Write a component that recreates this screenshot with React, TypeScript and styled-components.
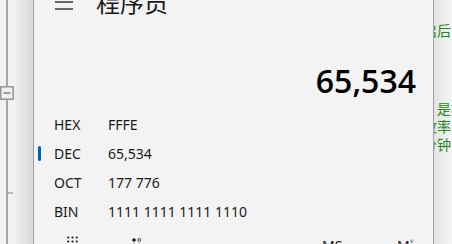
import React from 'react';
import styled, { createGlobalStyle } from 'styled-components';

const GlobalStyle = createGlobalStyle`
  html,
  body {
    margin: 0;
    padding: 0;
  }
  body {
    font-family: 'Noto Sans', 'Noto Sans CJK SC', sans-serif;
    background: #f3f3f3;
  }
`;

const Screen = styled.div`
  display: flex;
  width: 452px;
  height: 244px;
  overflow: hidden;
`;

const Gutter = styled.div`
  flex: 0 0 33px;
  border-right: 1px solid #a3a3a3;
  background: linear-gradient(
    to right,
    #f1f1f1 0,
    #f1f1f1 14px,
    #e6e6e6 22px,
    #d8d8d8 33px
  );
`;

const CalcWindow = styled.div`
  flex: 0 0 399px;
  display: flex;
  flex-direction: column;
  background: #f3f3f3;
  color: #1a1a1a;
`;

const Header = styled.div`
  display: flex;
  align-items: center;
  height: 40px;
  margin-top: -18px;
  padding-left: 21px;
  gap: 23px;
`;

const Title = styled.span`
  font-family: 'Noto Sans CJK SC', sans-serif;
  font-size: 24px;
  line-height: 40px;
`;

const Display = styled.div`
  padding: 39px 17px 0 0;
  text-align: right;
  font-family: 'Open Sans', 'Noto Sans', sans-serif;
  font-size: 32px;
  font-weight: 600;
  line-height: 40px;
  color: #000;
`;

const RowList = styled.div`
  margin-top: 9px;
  display: flex;
  flex-direction: column;
`;

const Row = styled.div`
  display: flex;
  align-items: center;
  height: 29px;
  padding-left: 4px;
  font-size: 14px;
  line-height: 29px;
`;

const Indicator = styled.span<{ $active?: boolean }>`
  width: 3px;
  height: 15px;
  border-radius: 2px;
  margin-right: 13px;
  background: ${(p) => (p.$active ? '#005fb8' : 'transparent')};
`;

const Label = styled.span`
  width: 54px;
`;

const Value = styled.span``;

const ButtonRow = styled.div`
  display: flex;
  align-items: flex-start;
  padding: 10px 0 0 33px;
`;

const IconSlot = styled.div<{ $gap?: number }>`
  display: flex;
  margin-left: ${(p) => p.$gap ?? 0}px;
`;

const MemoryGroup = styled.div`
  display: flex;
  margin-left: auto;
`;

const MemButton = styled.span<{ $width: number }>`
  width: ${(p) => p.$width}px;
  font-size: 14px;
  line-height: 20px;
`;

const CodePane = styled.div`
  flex: 1;
  border-left: 1px solid #a0a0a0;
  background: linear-gradient(to right, #e3e3e3, #f5f5f5);
  overflow: hidden;
  padding-top: 21px;
`;

const CodeBlock = styled.div<{ $top?: number }>`
  margin-left: -11px;
  margin-top: ${(p) => p.$top ?? 0}px;
  font-family: 'Noto Sans CJK SC', sans-serif;
  font-size: 14px;
  line-height: 18px;
  color: #238a23;
  white-space: nowrap;
`;

const TreeLines = () => (
  <svg width="33" height="244" viewBox="0 0 33 244">
    <line x1="7" y1="0" x2="7" y2="244" stroke="#a6a6a6" strokeWidth="2" />
    <line x1="7" y1="193" x2="13" y2="193" stroke="#a6a6a6" strokeWidth="1.5" />
    <rect x="0.8" y="86.8" width="12.4" height="12.4" fill="#f1f1f1" stroke="#9a9a9a" strokeWidth="1.6" />
    <line x1="3.5" y1="93" x2="10.5" y2="93" stroke="#8a8a8a" strokeWidth="1.6" />
  </svg>
);

const Hamburger = () => (
  <svg width="18" height="16" viewBox="0 0 18 16">
    <g stroke="#1a1a1a" strokeWidth="1.3">
      <line x1="0" y1="1" x2="18" y2="1" />
      <line x1="0" y1="8" x2="18" y2="8" />
      <line x1="0" y1="15" x2="18" y2="15" />
    </g>
  </svg>
);

const KeypadIcon = () => (
  <svg width="11" height="11" viewBox="0 0 11 11">
    {[1.5, 5.5, 9.5].map((y) =>
      [1.2, 5.5, 9.8].map((x) => <circle key={`${x}-${y}`} cx={x} cy={y} r="1.1" fill="#1a1a1a" />)
    )}
  </svg>
);

const BitIcon = () => (
  <svg width="10" height="12" viewBox="0 0 10 12">
    <circle cx="2" cy="4" r="1.8" fill="#1a1a1a" />
    <circle cx="7.3" cy="4" r="1.5" fill="none" stroke="#1a1a1a" strokeWidth="0.8" />
    <circle cx="2" cy="9.5" r="1.5" fill="none" stroke="#1a1a1a" strokeWidth="0.8" />
    <circle cx="7.3" cy="9.5" r="1.8" fill="#1a1a1a" />
  </svg>
);

const radixRows = [
  { label: 'HEX', value: 'FFFE' },
  { label: 'DEC', value: '65,534', active: true },
  { label: 'OCT', value: '177 776' },
  { label: 'BIN', value: '1111 1111 1111 1110' },
];

const App = () => {
  return (
    <>
      <GlobalStyle />
      <Screen>
        <Gutter>
          <TreeLines />
        </Gutter>
        <CalcWindow>
          <Header>
            <Hamburger />
            <Title>程序员</Title>
          </Header>
          <Display>65,534</Display>
          <RowList>
            {radixRows.map((r) => (
              <Row key={r.label}>
                <Indicator $active={r.active} />
                <Label>{r.label}</Label>
                <Value>{r.value}</Value>
              </Row>
            ))}
          </RowList>
          <ButtonRow>
            <IconSlot>
              <KeypadIcon />
            </IconSlot>
            <IconSlot $gap={54}>
              <BitIcon />
            </IconSlot>
            <MemoryGroup>
              <MemButton $width={75}>MS</MemButton>
              <MemButton $width={36}>M˅</MemButton>
            </MemoryGroup>
          </ButtonRow>
        </CalcWindow>
        <CodePane>
          <CodeBlock>启后</CodeBlock>
          <CodeBlock $top={60}>
            <div>　是框</div>
            <div>效率</div>
            <div>分钟</div>
          </CodeBlock>
        </CodePane>
      </Screen>
    </>
  );
};

export default App;
